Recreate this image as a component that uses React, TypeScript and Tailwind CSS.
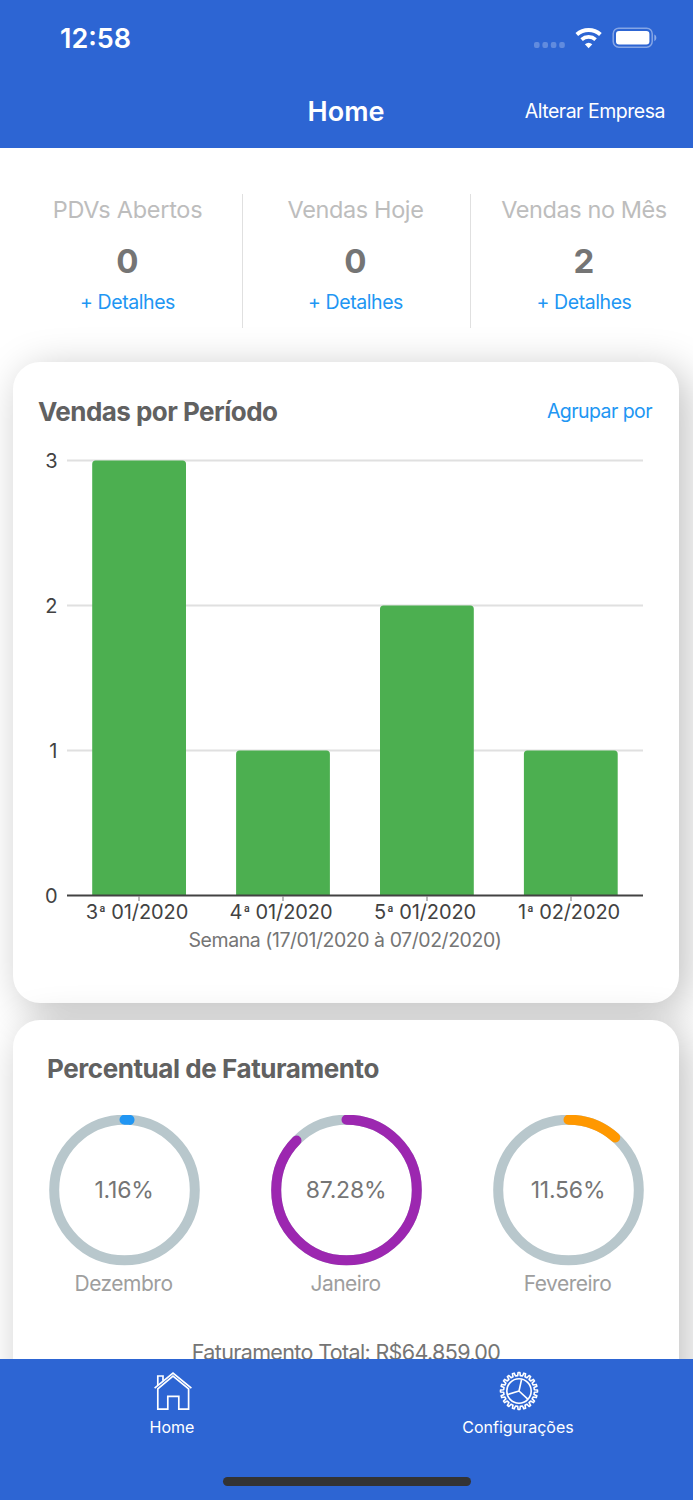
import React from "react";

const bars = [
  { week: "3", period: "01/2020", value: 3 },
  { week: "4", period: "01/2020", value: 1 },
  { week: "5", period: "01/2020", value: 2 },
  { week: "1", period: "02/2020", value: 1 },
];

const stats = [
  { label: "PDVs Abertos", value: "0", tracking: "tracking-[-0.27px]" },
  { label: "Vendas Hoje", value: "0", tracking: "tracking-[-0.38px]" },
  { label: "Vendas no Mês", value: "2", tracking: "tracking-[-0.42px]" },
];

const months = [
  { name: "Dezembro", percent: 1.16, color: "#2196f3" },
  { name: "Janeiro", percent: 87.28, color: "#9c27b0" },
  { name: "Fevereiro", percent: 11.56, color: "#ff9800" },
];

function StatusIcons() {
  return (
    <svg width="124" height="24" viewBox="0 0 124 24" fill="#fff">
      <g fillOpacity="0.25">
        <rect x="1" y="15" width="5.6" height="6" rx="2" />
        <rect x="9.4" y="15" width="5.6" height="6" rx="2" />
        <rect x="17.8" y="15" width="5.6" height="6" rx="2" />
        <rect x="26.2" y="15" width="5.6" height="6" rx="2" />
      </g>
      <g fill="none" stroke="#fff" strokeWidth="4">
        <path d="M43.8 7.4A17.8 17.8 0 0 1 67.4 7.4" />
        <path d="M48.6 12.6A10.6 10.6 0 0 1 62.6 12.6" strokeWidth="3.8" />
      </g>
      <path d="M55.6 21.3L51.9 17.2Q55.6 14.2 59.3 17.2Z" />
      <rect x="80.2" y="1.2" width="39" height="19" rx="5.6" fill="none" stroke="#fff" strokeOpacity="0.42" strokeWidth="1.5" />
      <rect x="83" y="4" width="33.4" height="13.6" rx="3" />
      <path d="M121.3 7.6C124 8.6 124 13 121.3 14.2Z" fillOpacity="0.45" />
    </svg>
  );
}

function BarChart() {
  return (
    <div className="flex flex-col">
      <svg width="666" height="454" viewBox="13 450 666 454" className="block overflow-visible">
        {[3, 2, 1].map((v) => (
          <line key={v} x1="67" x2="643" y1={895.5 - v * 145} y2={895.5 - v * 145} stroke="#e0e0e0" strokeWidth="1.8" />
        ))}
        {bars.map((b, i) => {
          const x = 92.2 + i * 143.9;
          const top = 895.3 - b.value * 144.9;
          return (
            <path key={i} d={`M${x} 895V${top + 3.5}q0-3.5 3.5-3.5h86.8q3.5 0 3.5 3.5V895Z`} fill="#4caf50" />
          );
        })}
        <line x1="67" x2="643" y1="895.5" y2="895.5" stroke="#424242" strokeWidth="1.8" />
        {bars.map((b, i) => (
          <line key={i} x1={139 + i * 144} x2={139 + i * 144} y1="896" y2="901" stroke="#8a8a8a" strokeWidth="1.2" />
        ))}
        {[3, 2, 1, 0].map((v) => (
          <text key={v} x="57.5" y={902.6 - v * 145} textAnchor="end" fontSize="20" fill="#424242">
            {v}
          </text>
        ))}
      </svg>
      <div className="ml-[52px] flex h-4 items-center">
        {bars.map((b, i) => (
          <div
            key={i}
            className="w-36 shrink-0 text-center text-[20px] leading-4 tracking-[-0.1px] whitespace-nowrap text-[#424242]"
          >
            {b.week}
            <span className="ml-px align-[2px] text-[15px] leading-none">ª</span>{" "}
            {b.period}
          </div>
        ))}
      </div>
    </div>
  );
}

function Ring({ percent, color }: { percent: number; color: string }) {
  const c = 2 * Math.PI * 70.3;
  return (
    <div className="grid h-[151px] w-[151px] place-items-center">
      <svg width="151" height="151" viewBox="0 0 151 151" className="col-start-1 row-start-1" fill="none" strokeWidth="10">
        <circle cx="75.5" cy="75" r="70.3" stroke="#b8c7cc" />
        <circle
          cx="75.5"
          cy="75"
          r="70.3"
          stroke={color}
          strokeLinecap="round"
          strokeDasharray={`${(c * percent) / 100} ${c}`}
          transform="rotate(-90 75.5 75)"
        />
      </svg>
      <span className="col-start-1 row-start-1 text-[23px] tracking-[-0.2px] text-[#757575]">{percent}%</span>
    </div>
  );
}

function HomeIcon() {
  return (
    <svg width="40" height="40" viewBox="0 0 40 40" fill="none" stroke="#fff" strokeWidth="1.7">
      <path d="M1.6 17.1L20 2L38.4 17.1" />
      <path d="M4.8 17.8V38.2H14.8V25.3H25.8V38.2H35.6V17.8L20 5.2Z" />
      <path d="M4.8 14.2V5H10V9.8" />
    </svg>
  );
}

function GearIcon() {
  const teeth = 20;
  let d = "";
  for (let i = 0; i < teeth; i++) {
    const at = (f: number, r: number) => {
      const a = ((i + f) / teeth) * 2 * Math.PI - Math.PI / 2;
      return `${(20 + r * Math.cos(a)).toFixed(2)} ${(20 + r * Math.sin(a)).toFixed(2)}`;
    };
    d += `${i ? "L" : "M"}${at(-0.16, 18.5)}L${at(0.16, 18.5)}L${at(0.27, 15.4)}L${at(0.73, 15.4)}`;
  }
  return (
    <svg width="40" height="40" viewBox="0 0 40 40" fill="none" stroke="#fff" strokeWidth="1.6" strokeLinejoin="round">
      <path d={d + "Z"} />
      <circle cx="20" cy="20" r="12.2" />
      <path d="M20 20L22.6 8.3M20 20L8.6 23.5M20 20L28.8 28.2" />
    </svg>
  );
}

export default function App() {
  return (
    <div className="flex h-[1500px] w-[693px] flex-col overflow-hidden bg-white font-['Inter',sans-serif]">
      <header className="relative z-10 flex h-[148px] shrink-0 flex-col bg-[#2d65d3] text-white">
        <div className="flex h-[74px] items-center justify-between pt-[4px] pr-[36px] pl-[60px]">
          <span className="text-[27px] font-semibold">12:58</span>
          <StatusIcons />
        </div>
        <div className="grid h-[74px] grid-cols-[1fr_auto_1fr] items-center pt-[2px] pr-7">
          <span className="col-start-2 pl-[27px] text-[27px] font-semibold">Home</span>
          <span className="justify-self-end text-[19.5px] tracking-[-0.48px]">Alterar Empresa</span>
        </div>
      </header>

      <main className="flex min-h-0 grow flex-col overflow-hidden">
        <section className="mt-[46px] ml-[15px] flex h-[134px] shrink-0">
          {stats.map((s, i) => (
            <div
              key={s.label}
              className={`flex w-[228px] shrink-0 flex-col items-center pr-[2px] ${i < 2 ? "border-r border-[#e0e0e0]" : ""}`}
            >
              <span className={`mt-[1px] text-[23.5px] leading-[30px] whitespace-nowrap text-[#bdbdbd] ${s.tracking}`}>{s.label}</span>
              <span className="mt-[16px] text-[33px] leading-[40px] font-bold text-[#757575]">{s.value}</span>
              <span className="mt-[8px] text-[19.5px] leading-[26px] tracking-[-0.42px] text-[#2196f3]">+ Detalhes</span>
            </div>
          ))}
        </section>

        <section className="mt-[34px] ml-[13px] flex h-[641px] w-[666px] shrink-0 flex-col rounded-[27px] bg-white shadow-[8px_8px_40px_rgba(0,0,0,0.25)]">
          <div className="flex h-[88px] items-center justify-between pt-3 pr-[27px] pl-[25px]">
            <h2 className="-mt-[2px] text-[26px] font-bold tracking-[-0.53px] text-[#616161]">Vendas por Período</h2>
            <span className="text-[19.5px] tracking-[-0.55px] text-[#2196f3]">Agrupar por</span>
          </div>
          <BarChart />
          <p className="mt-[6px] pr-[2px] text-center text-[19.5px] tracking-[-0.45px] text-[#757575]">
            Semana (17/01/2020 à 07/02/2020)
          </p>
        </section>

        <section className="mt-[17px] ml-[13px] flex h-[641px] w-[666px] shrink-0 flex-col rounded-[27px] bg-white shadow-[8px_8px_40px_rgba(0,0,0,0.25)]">
          <h2 className="mt-[32px] ml-[34px] text-[26px] leading-[34px] font-bold tracking-[-0.43px] text-[#616161]">
            Percentual de Faturamento
          </h2>
          <div className="mt-[29px] flex">
            {months.map((m) => (
              <div key={m.name} className="flex w-[222px] flex-col items-center">
                <Ring percent={m.percent} color={m.color} />
                <span className="mt-[4px] pr-[1px] text-[21px] leading-7 tracking-[-0.5px] text-[#9e9e9e]">{m.name}</span>
              </div>
            ))}
          </div>
          <p className="mt-[40px] text-center text-[21.5px] leading-7 tracking-[-0.64px] text-[#757575]">Faturamento Total: R$64.859,00</p>
        </section>
      </main>

      <nav className="relative z-10 flex h-[141px] shrink-0 flex-col bg-[#2d65d3] text-white">
        <div className="flex h-[118px] pt-3 pr-[1px]">
          <div className="flex w-1/2 flex-col items-center">
            <HomeIcon />
            <span className="mt-[4px] pr-[2px] text-[16px] leading-6">Home</span>
          </div>
          <div className="flex w-1/2 flex-col items-center">
            <GearIcon />
            <span className="mt-[4px] pr-[2px] text-[16px] leading-6">Configurações</span>
          </div>
        </div>
        <div className="mx-auto h-[9px] w-[248px] rounded-full bg-[#333333]" />
      </nav>
    </div>
  );
}
